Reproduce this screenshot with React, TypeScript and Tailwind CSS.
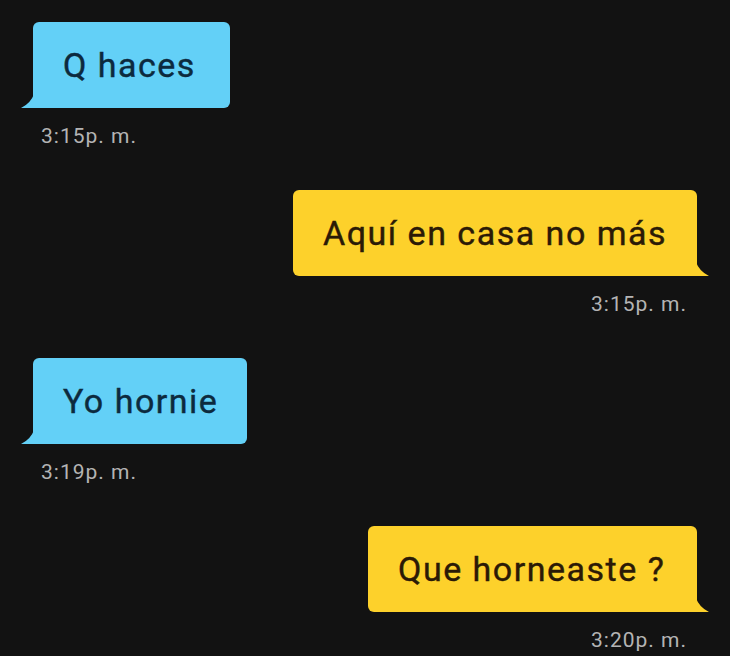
import React from "react";

type Msg = {
   text: string;
   time: string;
   mine: boolean;
   width: string;
};

const messages: Msg[] = [
   { text: "Q haces", time: "3:15p. m.", mine: false, width: "w-[197px]" },
   { text: "Aquí en casa no más", time: "3:15p. m.", mine: true, width: "w-[404px]" },
   { text: "Yo hornie", time: "3:19p. m.", mine: false, width: "w-[214px]" },
   { text: "Que horneaste ?", time: "3:20p. m.", mine: true, width: "w-[329px]" },
];

const Tail = ({ mine }: { mine: boolean }) =>
   mine ? (
      <svg
         className="absolute bottom-0 right-[-13px]"
         width="14"
         height="14"
         viewBox="0 0 14 14"
      >
         <path d="M0 0 Q3 9 13 14 L0 14 Z" fill="#fdd12b" />
      </svg>
   ) : (
      <svg
         className="absolute bottom-0 left-[-13px]"
         width="14"
         height="14"
         viewBox="0 0 14 14"
      >
         <path d="M14 0 Q11 9 1 14 L14 14 Z" fill="#63d0f7" />
      </svg>
   );

const Bubble = ({ msg }: { msg: Msg }) => (
   <div className={`flex flex-col mb-[43px] ${msg.mine ? "items-end" : "items-start"}`}>
      <div
         className={`relative h-[86px] flex items-center pl-[30px] rounded-[6px] ${msg.width} ${
            msg.mine
               ? "bg-[#fdd12b] text-[#2b1a06] rounded-br-none"
               : "bg-[#63d0f7] text-[#0c2a3e] rounded-bl-none"
         }`}
      >
         <span className="text-[34px] leading-none font-normal tracking-[1.5px] whitespace-nowrap [-webkit-text-stroke:0.4px_currentColor]">
            {msg.text}
         </span>
         <Tail mine={msg.mine} />
      </div>
      <div
         className={`mt-[18px] text-[21px] leading-[21px] tracking-[1px] text-[#b4b4b4] ${
            msg.mine ? "mr-[10px]" : "ml-[8px]"
         }`}
      >
         {msg.time}
      </div>
   </div>
);

export default function App() {
   return (
      <div
         className="w-[730px] h-[656px] bg-[#121212] px-[33px] pt-[22px] overflow-hidden flex flex-col"
         style={{ fontFamily: "Roboto, 'Liberation Sans', sans-serif" }}
      >
         {messages.map((m, i) => (
            <Bubble key={i} msg={m} />
         ))}
      </div>
   );
}
